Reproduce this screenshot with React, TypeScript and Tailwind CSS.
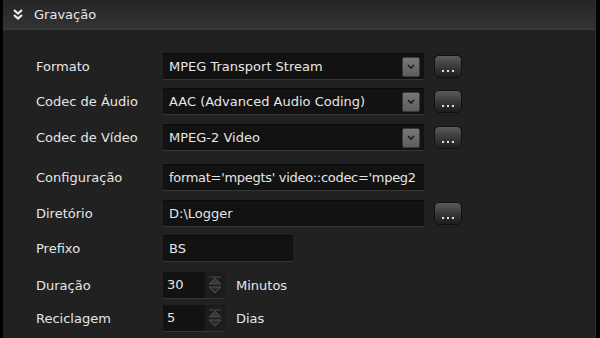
import React from "react";

const font = { fontFamily: '"DejaVu Sans", Verdana, sans-serif' };

function Arrow() {
  return (
    <div className="w-[18px] h-[20px] rounded-[2px] bg-gradient-to-b from-[#777] to-[#5e5e5e] border border-[#3a3a3a] flex items-center justify-center shrink-0">
      <svg width="8" height="5" viewBox="0 0 8 5">
        <path d="M1 1 L4 4 L7 1" stroke="#1a1a1a" strokeWidth="1.6" fill="none" />
      </svg>
    </div>
  );
}

function Dots() {
  return (
    <div className="ml-[10px] w-[28px] h-[23px] rounded-[5px] border border-[#111] bg-gradient-to-b from-[#5c5c5c] via-[#3a3a3a] to-[#1e1e1e] flex items-end justify-center pb-[5px] gap-[3px]">
      <span className="w-[2px] h-[2px] bg-[#ddd]" />
      <span className="w-[2px] h-[2px] bg-[#ddd]" />
      <span className="w-[2px] h-[2px] bg-[#ddd]" />
    </div>
  );
}

function Box({ w, children }: { w: string; children?: React.ReactNode }) {
  return (
    <div className={`${w} h-[27px] bg-[#121212] border-b border-[#363636] border-t border-t-[#0a0a0a] flex items-center pl-[6px] pr-[4px] text-[13px] text-[#e6e6e6] overflow-hidden whitespace-nowrap`}>
      {children}
    </div>
  );
}

function Spinner() {
  return (
    <div className="w-[20px] h-full bg-[#1c1c1c] flex flex-col items-center justify-center gap-[1px]">
      <svg width="14" height="9" viewBox="0 0 14 9">
        <path d="M1 8 L7 2 L13 8 Z" fill="#3a3a3a" stroke="#4a4a4a" />
        <line x1="1" y1="1" x2="13" y2="1" stroke="#4a4a4a" />
      </svg>
      <svg width="14" height="9" viewBox="0 0 14 9">
        <path d="M1 1 L7 7 L13 1 Z" fill="#2a2a2a" stroke="#555" />
      </svg>
    </div>
  );
}

function Row({ label, children, mt }: { label: string; children: React.ReactNode; mt: string }) {
  return (
    <div className={`flex items-center ${mt}`}>
      <div className="w-[127px] text-[13px] text-[#e6e6e6]">{label}</div>
      {children}
    </div>
  );
}

export default function App() {
  return (
    <div className="w-[600px] h-[338px] bg-black flex overflow-hidden" style={font}>
      <div className="ml-[3px] w-[593px] h-full bg-[#212121] border-r border-[#2e2e2e] flex flex-col">
        <div className="h-[30px] bg-gradient-to-b from-[#262626] to-[#333] border-b border-[#3c3c3c] flex items-center pl-[9px] shrink-0">
          <svg width="12" height="13" viewBox="0 0 12 13" className="mr-[10px]">
            <path d="M2 2 L6 5.5 L10 2" stroke="#eee" strokeWidth="2.2" fill="none" />
            <path d="M2 7 L6 10.5 L10 7" stroke="#eee" strokeWidth="2.2" fill="none" />
          </svg>
          <span className="text-[13px] text-[#e6e6e6]">Gravação</span>
        </div>
        <div className="pl-[33px] pt-[23px] flex flex-col">
          <Row label="Formato" mt="">
            <Box w="w-[261px]">
              <span className="flex-1">MPEG Transport Stream</span>
              <Arrow />
            </Box>
            <Dots />
          </Row>
          <Row label="Codec de Áudio" mt="mt-[8px]">
            <Box w="w-[261px]">
              <span className="flex-1">AAC (Advanced Audio Coding)</span>
              <Arrow />
            </Box>
            <Dots />
          </Row>
          <Row label="Codec de Vídeo" mt="mt-[9px]">
            <Box w="w-[261px]">
              <span className="flex-1">MPEG-2 Video</span>
              <Arrow />
            </Box>
            <Dots />
          </Row>
          <Row label="Configuração" mt="mt-[13px]">
            <Box w="w-[261px]">
              <span className="tracking-[-0.3px]">format='mpegts' video::codec='mpeg2</span>
            </Box>
          </Row>
          <Row label="Diretório" mt="mt-[9px]">
            <Box w="w-[261px]">
              <span className="flex-1">D:\Logger</span>
            </Box>
            <Dots />
          </Row>
          <Row label="Prefixo" mt="mt-[8px]">
            <Box w="w-[130px]">
              <span>BS</span>
            </Box>
          </Row>
          <Row label="Duração" mt="mt-[10px]">
            <div className="w-[62px] h-[27px] bg-[#121212] border-b border-[#363636] flex items-center text-[13px] text-[#e6e6e6]">
              <span className="flex-1 pl-[4px]">30</span>
              <Spinner />
            </div>
            <span className="ml-[11px] text-[13px] text-[#e6e6e6]">Minutos</span>
          </Row>
          <Row label="Reciclagem" mt="mt-[6px]">
            <div className="w-[62px] h-[27px] bg-[#121212] border-b border-[#363636] flex items-center text-[13px] text-[#e6e6e6]">
              <span className="flex-1 pl-[4px]">5</span>
              <Spinner />
            </div>
            <span className="ml-[11px] text-[13px] text-[#e6e6e6]">Dias</span>
          </Row>
        </div>
      </div>
    </div>
  );
}
